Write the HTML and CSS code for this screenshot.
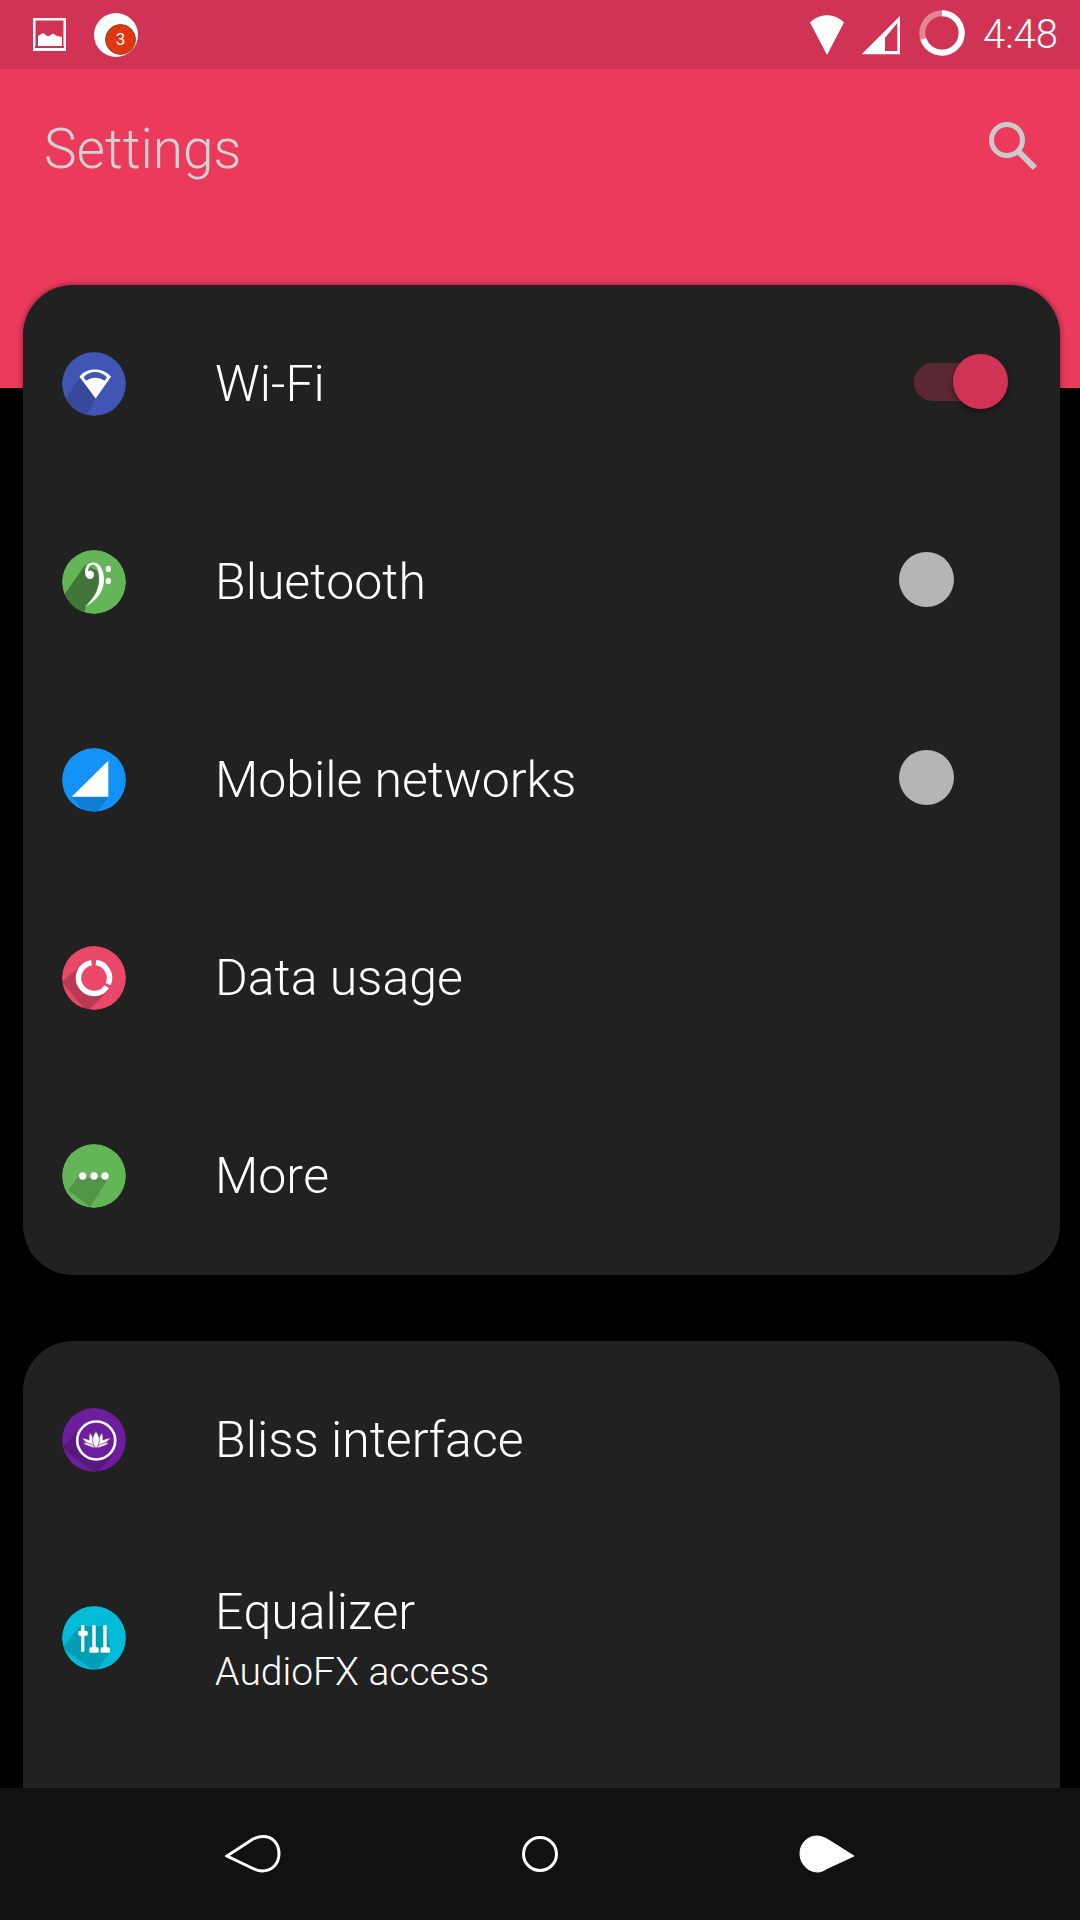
FILE: index.html
```html
<!DOCTYPE html>
<html lang="en">

<head>
    <meta charset="UTF-8">
    <meta name="viewport" content="width=device-width, initial-scale=1.0">
    <title>Settings</title>
    <link rel="stylesheet" href="styles.css">
</head>

<body>
    <div class="screen">
        <div class="status-bar">
            <svg class="st-image" width="33" height="33" viewBox="0 0 33 33">
                <path fill="#fff" fill-rule="evenodd" d="M0 0H33V33H0ZM2.5 2.5V28H30.5V2.5Z" />
                <path fill="#fff" d="M5 28V18L10 15L15 18.5L20 15.5L24 18L29 19V28Z" />
                <rect x="2" y="28" width="29" height="2" fill="#d13354" />
            </svg>
            <div class="st-notify">
                <div class="st-badge">3</div>
            </div>
            <div class="st-spacer"></div>
            <svg class="st-wifi" width="34" height="40" viewBox="0 0 34 40">
                <path fill="#fff" d="M0 7.5C5 2.5 11 0.3 17 0.3C23 0.3 29 2.5 34 7.5L17 40Z" />
            </svg>
            <svg class="st-signal" width="40" height="40" viewBox="0 0 40 40">
                <path fill="#fff" fill-rule="evenodd" d="M0.7 39.3L39 1V39.3ZM24 22.7V36H36.3V8Z" />
            </svg>
            <svg class="st-battery" width="46" height="46" viewBox="0 0 46 46">
                <circle cx="23" cy="23" r="19.7" fill="none" stroke="#fff" stroke-opacity=".4" stroke-width="6" />
                <circle cx="23" cy="23" r="19.7" fill="none" stroke="#fff" stroke-width="6" pathLength="100"
                    stroke-dasharray="70 30" transform="rotate(-90 23 23)" />
            </svg>
            <div class="st-time">4:48</div>
        </div>

        <div class="main">
            <header class="app-bar">
                <div class="title">Settings</div>
                <svg class="search" width="50" height="50" viewBox="0 0 50 50">
                    <circle cx="19" cy="19" r="15.5" fill="none" stroke="#cbcbcb" stroke-width="5" />
                    <path d="M30 30L47 47" stroke="#cbcbcb" stroke-width="6" />
                </svg>
            </header>

            <div class="sections">
                <section class="card">
                    <div class="row">
                        <svg class="icon" width="64" height="64" viewBox="0 0 64 64">
                            <circle cx="32" cy="32" r="32" fill="#4155b5" />
                            <polygon points="18,25 0,52 22,68 33.7,46.3" fill="#000" fill-opacity=".14" />
                            <path fill="#fff" d="M17.5 24.7C21 20 27 17.5 33 17.5C39 17.5 45 20 49 24.7L33.7 46.5ZM21.5 25.3L24 28.7C27 26.6 30 25.7 33 25.7C36.5 25.7 39.7 26.6 42.5 28.7L45 25.3C42 22 37.5 20 33 20C28.5 20 24.5 22 21.5 25.3Z" />
                        </svg>
                        <div class="label">Wi-Fi</div>
                        <div class="toggle toggle-on">
                            <div class="track"></div>
                            <div class="thumb"></div>
                        </div>
                    </div>
                    <div class="row">
                        <svg class="icon" width="64" height="64" viewBox="0 0 64 64">
                            <circle cx="32" cy="32" r="32" fill="#63b558" />
                            <polygon points="23,15 0,48 21,68 24,56 38,38 38,22" fill="#000" fill-opacity=".35" />
                            <path fill="#fff" d="M22.5 57C34 51 42 42 42 30C42 18.5 37 12.5 31 12.5C26 12.5 23 17 23 22C23 26 25 29 28 29C30.5 29 32 27 32 24.5C32 22 30 20.5 28 20.5C27 20.5 26.5 21 26 21.5C26.5 17 28.5 14.5 31 14.5C35 14.5 37 21 37 30C37 40 31 50 22.5 57Z" />
                            <ellipse cx="46.3" cy="19" rx="2.6" ry="3.2" fill="#fff" />
                            <ellipse cx="46.3" cy="31" rx="2.6" ry="3.2" fill="#fff" />
                        </svg>
                        <div class="label">Bluetooth</div>
                        <div class="toggle">
                            <div class="thumb"></div>
                        </div>
                    </div>
                    <div class="row">
                        <svg class="icon" width="64" height="64" viewBox="0 0 64 64">
                            <circle cx="32" cy="32" r="32" fill="#1393f7" />
                            <polygon points="9.7,48.7 46.3,48.7 34,66 24,66" fill="#000" fill-opacity=".14" />
                            <polygon points="46.3,12.7 46.3,48.7 9.7,48.7" fill="#fff" />
                        </svg>
                        <div class="label">Mobile networks</div>
                        <div class="toggle">
                            <div class="thumb"></div>
                        </div>
                    </div>
                    <div class="row">
                        <svg class="icon" width="64" height="64" viewBox="0 0 64 64">
                            <circle cx="32" cy="32" r="32" fill="#e94869" />
                            <polygon points="18,20 0,36 25,66 47,44" fill="#000" fill-opacity=".2" />
                            <circle cx="32" cy="32" r="15" fill="#e94869" />
                            <path fill="none" stroke="#fff" stroke-width="5.5" d="M34 16.6A15.5 15.5 0 0 1 46.2 38.2M44.8 40.7A15.5 15.5 0 1 1 29.5 16.7" />
                        </svg>
                        <div class="label">Data usage</div>
                    </div>
                    <div class="row">
                        <svg class="icon" width="64" height="64" viewBox="0 0 64 64">
                            <circle cx="32" cy="32" r="32" fill="#63b558" />
                            <polygon points="16.3,32.7 6.3,46 28,63 46.3,34.3" fill="#000" fill-opacity=".18" />
                            <circle cx="20.7" cy="32" r="3.7" fill="#fff" />
                            <circle cx="32" cy="32" r="3.7" fill="#fff" />
                            <circle cx="43" cy="32" r="3.7" fill="#fff" />
                        </svg>
                        <div class="label">More</div>
                    </div>
                </section>

                <section class="card card-last">
                    <div class="row">
                        <svg class="icon" width="64" height="64" viewBox="0 0 64 64">
                            <circle cx="32" cy="32" r="32" fill="#6d1e9c" />
                            <polygon points="19,20 0,40 34,66 52,46" fill="#000" fill-opacity=".18" />
                            <circle cx="34.2" cy="32.5" r="19" fill="#6d1e9c" stroke="#fff" stroke-width="2.6" />
                            <g fill="#fff" stroke="#6d1e9c" stroke-width=".7">
                                <path d="M34 40.5C30 38 25 37 20 30C22 30 25 31 27 32C27 28 27 26 28 25C30 27 32 30 34 40.5Z" />
                                <path d="M34 40.5C38 38 43 37 48.5 30C46 30 43 31 41 32C41 28 41 26 40 25C38 27 36 30 34 40.5Z" />
                                <path d="M34 40.5C30 36 29 29 34 23.5C39 29 38 36 34 40.5Z" />
                                <path d="M34 40.5C30 39 24 38 21 35C25 34 31 36 34 40.5Z" />
                                <path d="M34 40.5C38 39 44 38 47 35C43 34 37 36 34 40.5Z" />
                            </g>
                        </svg>
                        <div class="label">Bliss interface</div>
                    </div>
                    <div class="row">
                        <svg class="icon" width="64" height="64" viewBox="0 0 64 64">
                            <circle cx="32" cy="32" r="32" fill="#00bcd9" />
                            <polygon points="18,20 0,42 34,66 48,46 45,20" fill="#000" fill-opacity=".16" />
                            <g fill="#fff">
                                <rect x="19" y="19" width="3.4" height="27" rx="1.2" />
                                <rect x="16.3" y="24.7" width="9.4" height="5" rx="1.5" />
                                <rect x="30.3" y="19" width="3.4" height="27" rx="1.2" />
                                <rect x="27.3" y="41.3" width="9.4" height="5.4" rx="1.5" />
                                <rect x="41.3" y="19" width="3.4" height="27" rx="1.2" />
                                <rect x="38.5" y="41.3" width="9.4" height="5.4" rx="1.5" />
                            </g>
                        </svg>
                        <div class="label-group">
                            <div class="label">Equalizer</div>
                            <div class="sublabel">AudioFX access</div>
                        </div>
                    </div>
                </section>
            </div>
        </div>

        <nav class="nav-bar">
            <svg class="nav-icon" width="56" height="38" viewBox="0 0 56 38">
                <path fill="none" stroke="#fff" stroke-width="3" d="M2 21L28 4C32 2 35 1.5 38 1.5C48 1.5 54 9 54 18.5C54 28 48 36 37 36C34 36 31 35 28 33.5Z" />
            </svg>
            <svg class="nav-icon" width="38" height="38" viewBox="0 0 38 38">
                <circle cx="19" cy="19" r="16.5" fill="none" stroke="#fff" stroke-width="3" />
            </svg>
            <svg class="nav-icon flip" width="56" height="38" viewBox="0 0 56 38">
                <path fill="#fff" stroke="#fff" stroke-width="1" d="M1 21L28 4C32 2 35 1 38 1C48 1 55 9 55 18.5C55 28 48 37 37 37C34 37 31 35.5 28 33.5Z" />
            </svg>
        </nav>
    </div>
</body>

</html>
```
FILE: styles.css
```css
* {
    box-sizing: border-box;
}

body {
    margin: 0;
    background: #000;
    font-family: Roboto, "Noto Sans", sans-serif;
    font-weight: 300;
    color: #fff;
}

.screen {
    width: 1080px;
    height: 1920px;
    display: flex;
    flex-direction: column;
    overflow: hidden;
}

/* status bar */
.status-bar {
    height: 69px;
    flex: none;
    background: #d13354;
    display: flex;
    align-items: center;
    padding: 0 22px 0 33px;
}

.st-notify {
    position: relative;
    width: 44px;
    height: 44px;
    margin-left: 28px;
    border-radius: 50%;
    background: #fff;
}

.st-badge {
    position: absolute;
    left: 11px;
    top: 11px;
    width: 31px;
    height: 31px;
    border-radius: 50%;
    background: #e2360f;
    border: 1px solid #8a4a3a;
    font-size: 17px;
    font-weight: 400;
    line-height: 29px;
    text-align: center;
}

.st-spacer {
    flex: 1;
}

.st-signal {
    margin-left: 17px;
}

.st-battery {
    margin-left: 18px;
    margin-bottom: 3px;
}

.st-time {
    margin-left: 18px;
    font-size: 40px;
    line-height: 69px;
}

/* app bar */
.main {
    flex: 1;
    min-height: 0;
    overflow: hidden;
}

.app-bar {
    height: 319px;
    background: #ec3a5d;
    display: flex;
    align-items: flex-start;
    justify-content: space-between;
    padding: 48px 42px 0 44px;
}

.title {
    font-size: 55px;
    line-height: 64px;
    color: #d2d2d2;
}

.search {
    margin-top: 4px;
}

/* cards */
.sections {
    margin-top: -103px;
    padding: 0 20px 0 23px;
    display: flex;
    flex-direction: column;
    gap: 66px;
}

.card {
    background: #212121;
    border-radius: 50px;
    box-shadow: 0 0 4px 2px rgba(0, 0, 0, .25);
}

.card-last {
    padding-bottom: 100px;
}

.row {
    height: 198px;
    display: flex;
    align-items: center;
    padding: 0 52px 0 39px;
}

.icon {
    flex: none;
    border-radius: 50%;
    overflow: hidden;
    margin-right: 89px;
}

.label {
    font-size: 50px;
    line-height: 56px;
    font-kerning: none;
}

.label-group {
    display: flex;
    flex-direction: column;
    margin-top: 8px;
}

.label-group .label {
    line-height: 60px;
}

.sublabel {
    font-size: 39px;
    line-height: 60px;
    font-kerning: none;
}

/* toggles */
.toggle {
    position: relative;
    width: 109px;
    height: 55px;
    margin-left: auto;
    margin-bottom: 6px;
}

.track {
    position: absolute;
    left: 15px;
    top: 9px;
    width: 80px;
    height: 38px;
    border-radius: 19px;
    background: #5a2833;
}

.thumb {
    position: absolute;
    left: 0;
    top: 0;
    width: 55px;
    height: 55px;
    border-radius: 50%;
    background: #b5b5b5;
}

.toggle-on .thumb {
    left: 54px;
    background: #d13354;
    box-shadow: 0 3px 6px rgba(0, 0, 0, .4);
}

/* nav bar */
.nav-bar {
    height: 132px;
    flex: none;
    background: #111;
    display: grid;
    grid-template-columns: repeat(3, 287px);
    justify-content: center;
    justify-items: center;
    align-items: center;
}

.flip {
    transform: scaleX(-1);
}
```
